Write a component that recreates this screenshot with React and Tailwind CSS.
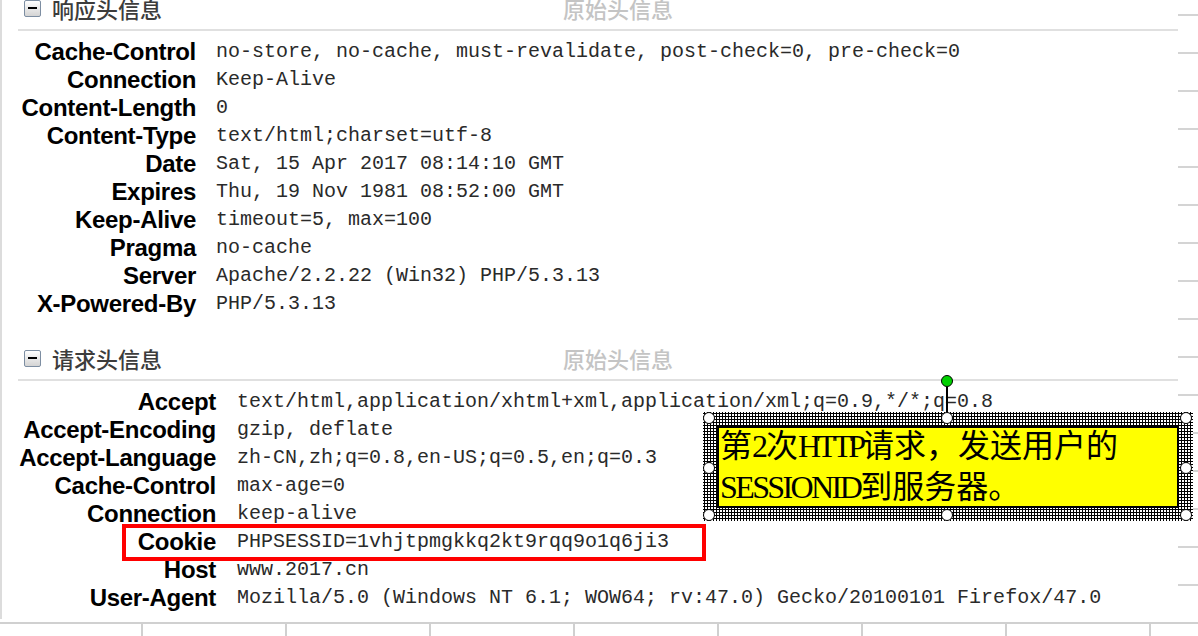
import React from "react";

const responseHeaders = [
  ["Cache-Control", "no-store, no-cache, must-revalidate, post-check=0, pre-check=0"],
  ["Connection", "Keep-Alive"],
  ["Content-Length", "0"],
  ["Content-Type", "text/html;charset=utf-8"],
  ["Date", "Sat, 15 Apr 2017 08:14:10 GMT"],
  ["Expires", "Thu, 19 Nov 1981 08:52:00 GMT"],
  ["Keep-Alive", "timeout=5, max=100"],
  ["Pragma", "no-cache"],
  ["Server", "Apache/2.2.22 (Win32) PHP/5.3.13"],
  ["X-Powered-By", "PHP/5.3.13"],
];

const requestHeaders = [
  ["Accept", "text/html,application/xhtml+xml,application/xml;q=0.9,*/*;q=0.8"],
  ["Accept-Encoding", "gzip, deflate"],
  ["Accept-Language", "zh-CN,zh;q=0.8,en-US;q=0.5,en;q=0.3"],
  ["Cache-Control", "max-age=0"],
  ["Connection", "keep-alive"],
  ["Cookie", "PHPSESSID=1vhjtpmgkkq2kt9rqq9o1q6ji3"],
  ["Host", "www.2017.cn"],
  ["User-Agent", "Mozilla/5.0 (Windows NT 6.1; WOW64; rv:47.0) Gecko/20100101 Firefox/47.0"],
];

function SectionHeader({ title, className }) {
  return (
    <div className={className}>
      <div className="h-[28px] flex items-center pl-[22px]">
        <div className="w-[539px] flex items-center gap-[11px]">
          {/* collapse box */}
          <div className="w-[17px] h-[17px] border border-[#7d8ea2] rounded-[2px] bg-gradient-to-b from-white to-[#d4d4d4] flex items-center justify-center">
            <div className="w-[9px] h-[2px] bg-black" />
          </div>
          <span className="text-[22px] leading-none font-medium text-[#3c3c3c] font-['Noto_Sans_CJK_SC',sans-serif]">{title}</span>
        </div>
        <span className="text-[22px] leading-none font-medium text-[#c4c4c4] font-['Noto_Sans_CJK_SC',sans-serif]">原始头信息</span>
      </div>
      <div className="mt-[7px] ml-[16px] h-[2px] bg-[#e0e0e0]" />
    </div>
  );
}

function HeaderRows({ rows, labelWidth, gap }) {
  return (
    <div className="mt-[7px] flex flex-col">
      {rows.map(([k, v]) => (
        <div key={k} className="relative h-[28px] flex items-center" style={{ gap }}>
          <div
            className="text-right text-[24px] leading-none font-bold text-black font-['Liberation_Sans',Arial,sans-serif] tracking-[-0.3px] shrink-0"
            style={{ width: labelWidth }}
          >
            {k}
          </div>
          <div className="text-[20px] leading-none text-[#2a2a2a] font-['Liberation_Mono',monospace] whitespace-pre">{v}</div>
          {k === "Cookie" && (
            <div className="absolute left-[120px] top-[-4px] w-[584px] h-[37px] border-4 border-[#ff0000]" />
          )}
        </div>
      ))}
    </div>
  );
}

function Handle({ x, y, green }) {
  return (
    <div
      className={
        "absolute w-[12px] h-[12px] -ml-[6px] -mt-[6px] rounded-full border-[1.5px] border-black " +
        (green ? "bg-[#00d000]" : "bg-white")
      }
      style={{ left: x, top: y }}
    />
  );
}

export default function App() {
  return (
    <div className="relative w-[1198px] h-[636px] overflow-hidden bg-white flex flex-col">
      <div className="flex h-[619px]">
        <div className="w-[1178px] border-l-2 border-[#dcdcdc] overflow-hidden">
          <SectionHeader title="响应头信息" className="-mt-[6px]" />
          <HeaderRows rows={responseHeaders} labelWidth={194} gap={20} />
          <SectionHeader title="请求头信息" className="mt-[26px]" />
          <HeaderRows rows={requestHeaders} labelWidth={214} gap={21} />
        </div>
        {/* grid lines peeking on the right */}
        <div className="w-[20px] flex flex-col pt-[14px] gap-[36px]">
          {Array.from({ length: 16 }).map((_, i) => (
            <div key={i} className="h-[2px] bg-[#d4d4d4]" />
          ))}
        </div>
      </div>
      <div className="mt-[3px] h-[2px] bg-[#d0d0d0]" />
      <div className="flex-1 flex pl-[141px] gap-[142px]">
        {Array.from({ length: 8 }).map((_, i) => (
          <div key={i} className="w-[2px] bg-[#d0d0d0]" />
        ))}
      </div>

      {/* selected annotation shape */}
      <div className="absolute left-[703px] top-[412px] w-[490px] h-[109px]">
        <div className="absolute inset-0 bg-white bg-[radial-gradient(#000_50%,transparent_51%)] bg-[length:3px_3px]" />
        <div className="absolute left-[243px] top-[-25px] w-[2px] h-[25px] bg-black" />
        <div className="absolute left-[14px] top-[14px] w-[462px] h-[82px] border-2 border-black bg-[#ffff00] pl-[1px]">
          <div className="-mt-[2px] text-[32px] leading-[41px] text-black font-['Liberation_Serif','Noto_Sans_CJK_SC',serif]">
            <div>
              第<span className="tracking-[-2px]">2</span>次<span className="tracking-[-4px]">HTTP</span>请求，发送用户的
            </div>
            <div>
              <span className="tracking-[-2.6px]">SESSIONID</span>到服务器。
            </div>
          </div>
        </div>
        <Handle x={6} y={6} />
        <Handle x={244} y={6} />
        <Handle x={483} y={6} />
        <Handle x={6} y={56} />
        <Handle x={483} y={56} />
        <Handle x={6} y={103} />
        <Handle x={244} y={103} />
        <Handle x={483} y={103} />
        <Handle x={244} y={-31} green />
      </div>
    </div>
  );
}
